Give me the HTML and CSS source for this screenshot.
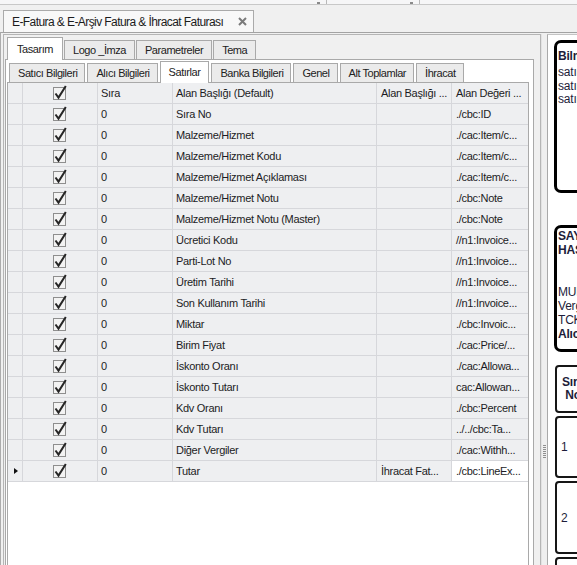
FILE: index.html
```html
<!DOCTYPE html>
<html lang="tr">
<head>
<meta charset="utf-8">
<title>E-Fatura Tasarım</title>
<link rel="stylesheet" href="styles.css">
</head>
<body>
<div class="toolbar">
  <div class="tb-box tb-a"><span class="tb-mark"></span></div>
  <div class="tb-box tb-b"><span class="tb-mark"></span></div>
</div>
<div class="doc-tabs">
  <div class="doc-tab">
    <span class="doc-title">E-Fatura &amp; E-Arşiv Fatura &amp; İhracat Faturası</span>
    <svg class="close" width="9" height="9" viewBox="0 0 9 9"><path d="M1 1 L8 8 M8 1 L1 8" stroke="#7b7b7b" stroke-width="2" fill="none"/></svg>
  </div>
</div>
<div class="doc-page">
  <div class="left-panel">
    <div class="tabs1">
      <div class="tab1 active">Tasarım</div>
      <div class="tab1">Logo _İmza</div>
      <div class="tab1">Parametreler</div>
      <div class="tab1">Tema</div>
    </div>
    <div class="page1">
      <div class="tabs2">
        <div class="tab2">Satıcı Bilgileri</div>
        <div class="tab2">Alıcı Bilgileri</div>
        <div class="tab2 active">Satırlar</div>
        <div class="tab2">Banka Bilgileri</div>
        <div class="tab2">Genel</div>
        <div class="tab2">Alt Toplamlar</div>
        <div class="tab2">İhracat</div>
      </div>
      <div class="page2">
        <div class="grid">
          <div class="row">
            <div class="c ind"></div>
            <div class="c chk"><svg class="cb" width="15" height="15" viewBox="0 0 15 15"><rect x="1.5" y="2.5" width="12" height="12" fill="#f3f3f3" stroke="#8e8e8e"/><path d="M3.5 8.5 L6.5 12.6 L13.8 1" fill="none" stroke="#262626" stroke-width="2"/></svg></div>
            <div class="c">Sıra</div>
            <div class="c">Alan Başlığı (Default)</div>
            <div class="c c4">Alan Başlığı ...</div>
            <div class="c c5">Alan Değeri ...</div>
          </div>
          <div class="row"><div class="c ind"></div><div class="c chk"><svg class="cb" width="15" height="15" viewBox="0 0 15 15"><rect x="1.5" y="2.5" width="12" height="12" fill="#f3f3f3" stroke="#8e8e8e"/><path d="M3.5 8.5 L6.5 12.6 L13.8 1" fill="none" stroke="#262626" stroke-width="2"/></svg></div><div class="c">0</div><div class="c">Sıra No</div><div class="c c4"></div><div class="c c5">./cbc:ID</div></div>
          <div class="row"><div class="c ind"></div><div class="c chk"><svg class="cb" width="15" height="15" viewBox="0 0 15 15"><rect x="1.5" y="2.5" width="12" height="12" fill="#f3f3f3" stroke="#8e8e8e"/><path d="M3.5 8.5 L6.5 12.6 L13.8 1" fill="none" stroke="#262626" stroke-width="2"/></svg></div><div class="c">0</div><div class="c">Malzeme/Hizmet</div><div class="c c4"></div><div class="c c5">./cac:Item/c...</div></div>
          <div class="row"><div class="c ind"></div><div class="c chk"><svg class="cb" width="15" height="15" viewBox="0 0 15 15"><rect x="1.5" y="2.5" width="12" height="12" fill="#f3f3f3" stroke="#8e8e8e"/><path d="M3.5 8.5 L6.5 12.6 L13.8 1" fill="none" stroke="#262626" stroke-width="2"/></svg></div><div class="c">0</div><div class="c">Malzeme/Hizmet Kodu</div><div class="c c4"></div><div class="c c5">./cac:Item/c...</div></div>
          <div class="row"><div class="c ind"></div><div class="c chk"><svg class="cb" width="15" height="15" viewBox="0 0 15 15"><rect x="1.5" y="2.5" width="12" height="12" fill="#f3f3f3" stroke="#8e8e8e"/><path d="M3.5 8.5 L6.5 12.6 L13.8 1" fill="none" stroke="#262626" stroke-width="2"/></svg></div><div class="c">0</div><div class="c">Malzeme/Hizmet Açıklaması</div><div class="c c4"></div><div class="c c5">./cac:Item/c...</div></div>
          <div class="row"><div class="c ind"></div><div class="c chk"><svg class="cb" width="15" height="15" viewBox="0 0 15 15"><rect x="1.5" y="2.5" width="12" height="12" fill="#f3f3f3" stroke="#8e8e8e"/><path d="M3.5 8.5 L6.5 12.6 L13.8 1" fill="none" stroke="#262626" stroke-width="2"/></svg></div><div class="c">0</div><div class="c">Malzeme/Hizmet Notu</div><div class="c c4"></div><div class="c c5">./cbc:Note</div></div>
          <div class="row"><div class="c ind"></div><div class="c chk"><svg class="cb" width="15" height="15" viewBox="0 0 15 15"><rect x="1.5" y="2.5" width="12" height="12" fill="#f3f3f3" stroke="#8e8e8e"/><path d="M3.5 8.5 L6.5 12.6 L13.8 1" fill="none" stroke="#262626" stroke-width="2"/></svg></div><div class="c">0</div><div class="c">Malzeme/Hizmet Notu (Master)</div><div class="c c4"></div><div class="c c5">./cbc:Note</div></div>
          <div class="row"><div class="c ind"></div><div class="c chk"><svg class="cb" width="15" height="15" viewBox="0 0 15 15"><rect x="1.5" y="2.5" width="12" height="12" fill="#f3f3f3" stroke="#8e8e8e"/><path d="M3.5 8.5 L6.5 12.6 L13.8 1" fill="none" stroke="#262626" stroke-width="2"/></svg></div><div class="c">0</div><div class="c">Ücretici Kodu</div><div class="c c4"></div><div class="c c5">//n1:Invoice...</div></div>
          <div class="row"><div class="c ind"></div><div class="c chk"><svg class="cb" width="15" height="15" viewBox="0 0 15 15"><rect x="1.5" y="2.5" width="12" height="12" fill="#f3f3f3" stroke="#8e8e8e"/><path d="M3.5 8.5 L6.5 12.6 L13.8 1" fill="none" stroke="#262626" stroke-width="2"/></svg></div><div class="c">0</div><div class="c">Parti-Lot No</div><div class="c c4"></div><div class="c c5">//n1:Invoice...</div></div>
          <div class="row"><div class="c ind"></div><div class="c chk"><svg class="cb" width="15" height="15" viewBox="0 0 15 15"><rect x="1.5" y="2.5" width="12" height="12" fill="#f3f3f3" stroke="#8e8e8e"/><path d="M3.5 8.5 L6.5 12.6 L13.8 1" fill="none" stroke="#262626" stroke-width="2"/></svg></div><div class="c">0</div><div class="c">Üretim Tarihi</div><div class="c c4"></div><div class="c c5">//n1:Invoice...</div></div>
          <div class="row"><div class="c ind"></div><div class="c chk"><svg class="cb" width="15" height="15" viewBox="0 0 15 15"><rect x="1.5" y="2.5" width="12" height="12" fill="#f3f3f3" stroke="#8e8e8e"/><path d="M3.5 8.5 L6.5 12.6 L13.8 1" fill="none" stroke="#262626" stroke-width="2"/></svg></div><div class="c">0</div><div class="c">Son Kullanım Tarihi</div><div class="c c4"></div><div class="c c5">//n1:Invoice...</div></div>
          <div class="row"><div class="c ind"></div><div class="c chk"><svg class="cb" width="15" height="15" viewBox="0 0 15 15"><rect x="1.5" y="2.5" width="12" height="12" fill="#f3f3f3" stroke="#8e8e8e"/><path d="M3.5 8.5 L6.5 12.6 L13.8 1" fill="none" stroke="#262626" stroke-width="2"/></svg></div><div class="c">0</div><div class="c">Miktar</div><div class="c c4"></div><div class="c c5">./cbc:Invoic...</div></div>
          <div class="row"><div class="c ind"></div><div class="c chk"><svg class="cb" width="15" height="15" viewBox="0 0 15 15"><rect x="1.5" y="2.5" width="12" height="12" fill="#f3f3f3" stroke="#8e8e8e"/><path d="M3.5 8.5 L6.5 12.6 L13.8 1" fill="none" stroke="#262626" stroke-width="2"/></svg></div><div class="c">0</div><div class="c">Birim Fiyat</div><div class="c c4"></div><div class="c c5">./cac:Price/...</div></div>
          <div class="row"><div class="c ind"></div><div class="c chk"><svg class="cb" width="15" height="15" viewBox="0 0 15 15"><rect x="1.5" y="2.5" width="12" height="12" fill="#f3f3f3" stroke="#8e8e8e"/><path d="M3.5 8.5 L6.5 12.6 L13.8 1" fill="none" stroke="#262626" stroke-width="2"/></svg></div><div class="c">0</div><div class="c">İskonto Oranı</div><div class="c c4"></div><div class="c c5">./cac:Allowa...</div></div>
          <div class="row"><div class="c ind"></div><div class="c chk"><svg class="cb" width="15" height="15" viewBox="0 0 15 15"><rect x="1.5" y="2.5" width="12" height="12" fill="#f3f3f3" stroke="#8e8e8e"/><path d="M3.5 8.5 L6.5 12.6 L13.8 1" fill="none" stroke="#262626" stroke-width="2"/></svg></div><div class="c">0</div><div class="c">İskonto Tutarı</div><div class="c c4"></div><div class="c c5">cac:Allowan...</div></div>
          <div class="row"><div class="c ind"></div><div class="c chk"><svg class="cb" width="15" height="15" viewBox="0 0 15 15"><rect x="1.5" y="2.5" width="12" height="12" fill="#f3f3f3" stroke="#8e8e8e"/><path d="M3.5 8.5 L6.5 12.6 L13.8 1" fill="none" stroke="#262626" stroke-width="2"/></svg></div><div class="c">0</div><div class="c">Kdv Oranı</div><div class="c c4"></div><div class="c c5">./cbc:Percent</div></div>
          <div class="row"><div class="c ind"></div><div class="c chk"><svg class="cb" width="15" height="15" viewBox="0 0 15 15"><rect x="1.5" y="2.5" width="12" height="12" fill="#f3f3f3" stroke="#8e8e8e"/><path d="M3.5 8.5 L6.5 12.6 L13.8 1" fill="none" stroke="#262626" stroke-width="2"/></svg></div><div class="c">0</div><div class="c">Kdv Tutarı</div><div class="c c4"></div><div class="c c5">../../cbc:Ta...</div></div>
          <div class="row"><div class="c ind"></div><div class="c chk"><svg class="cb" width="15" height="15" viewBox="0 0 15 15"><rect x="1.5" y="2.5" width="12" height="12" fill="#f3f3f3" stroke="#8e8e8e"/><path d="M3.5 8.5 L6.5 12.6 L13.8 1" fill="none" stroke="#262626" stroke-width="2"/></svg></div><div class="c">0</div><div class="c">Diğer Vergiler</div><div class="c c4"></div><div class="c c5">./cac:Withh...</div></div>
          <div class="row"><div class="c ind"><span class="arrow"></span></div><div class="c chk"><svg class="cb" width="15" height="15" viewBox="0 0 15 15"><rect x="1.5" y="2.5" width="12" height="12" fill="#f3f3f3" stroke="#8e8e8e"/><path d="M3.5 8.5 L6.5 12.6 L13.8 1" fill="none" stroke="#262626" stroke-width="2"/></svg></div><div class="c">0</div><div class="c">Tutar</div><div class="c c4">İhracat Fat...</div><div class="c c5 focus">./cbc:LineEx...</div></div>
        </div>
      </div>
    </div>
  </div>
  <div class="splitter"><div class="grip"></div></div>
  <div class="right-panel">
    <div class="box box1">
      <div class="b">Bilmeniz gereken notlar</div>
      <div class="l">satır açıklaması 1</div>
      <div class="l">satır açıklaması 2</div>
      <div class="l">satır açıklaması 3</div>
    </div>
    <div class="box box2">
      <div class="b">SAYIN</div>
      <div class="b">HASAN YILMAZ</div>
      <div class="l">&nbsp;</div>
      <div class="l">&nbsp;</div>
      <div class="l">MUHASEBE</div>
      <div class="l">Vergi Dairesi:</div>
      <div class="l">TCKN:</div>
      <div class="b">Alıcı Bilgileri</div>
    </div>
    <div class="tbl">
      <div class="cell head"><span class="hl">Sıra</span><span class="hl">No</span></div>
      <div class="cell r1">1</div>
      <div class="cell r2">2</div>
      <div class="cell r3"></div>
    </div>
  </div>
</div>
</body>
</html>
```
FILE: styles.css
```css
* { box-sizing: border-box; }
html, body { margin: 0; height: 100%; overflow: hidden; }
body {
  width: 577px;
  height: 565px;
  background: #f0f0f0;
  font-family: "Liberation Sans", Arial, sans-serif;
  font-size: 11px;
  letter-spacing: -0.3px;
  color: #1e1e1e;
  display: flex;
  flex-direction: column;
}

/* top toolbar remnant */
.toolbar {
  height: 5px;
  flex-shrink: 0;
  background: #f6f6f7;
  border-bottom: 1px solid #c8c8c8;
  display: flex;
  padding-left: 200px;
}
.tb-box {
  height: 4px;
  border-right: 1px solid #b9b9b9;
  position: relative;
}
.tb-a { width: 127px; }
.tb-b { width: 93px; }
.tb-mark {
  position: absolute;
  right: 6px;
  bottom: 0;
  width: 3px;
  height: 2px;
  background: #8a8a8a;
}

/* document tab */
.doc-tabs {
  height: 27px;
  flex-shrink: 0;
  padding: 5px 0 0 3px;
  display: flex;
}
.doc-tab {
  height: 22px;
  border: 1px solid #aaaaaa;
  border-bottom: none;
  background: #f8f8f8;
  padding: 0 6px 0 8px;
  display: flex;
  align-items: center;
  font-size: 12px;
  color: #1c1c1c;
}
.doc-title { margin-right: 15px; letter-spacing: -0.58px; }
.close { display: block; }

/* document page */
.doc-page {
  flex: 1;
  min-height: 0;
  display: flex;
  border-top: 1px solid #a3a3a3;
  border-left: 1px solid #acacac;
  padding: 1px 0 0 2px;
}
.left-panel {
  width: 538px;
  flex-shrink: 0;
  border: 1px solid #b5b5b5;
  border-bottom: none;
  padding: 2px 6px 0 1px;
  display: flex;
  flex-direction: column;
}

/* level 1 tabs */
.tabs1 {
  height: 22px;
  flex-shrink: 0;
  display: flex;
  align-items: flex-start;
  padding-left: 2px;
  gap: 1px;
}
.tab1 {
  margin-top: 3px;
  height: 19px;
  border: 1px solid #a9a9a9;
  border-bottom: none;
  background: #ebebeb;
  padding: 0 8px;
  line-height: 18px;
  letter-spacing: -0.45px;
  white-space: nowrap;
  color: #222;
}
.tab1.active {
  margin-top: 0;
  height: 23px;
  line-height: 22px;
  padding: 0 9px;
  background: #fff;
  position: relative;
  z-index: 1;
}
.page1 {
  flex: 1;
  min-height: 0;
  border: 1px solid #a9a9a9;
  border-bottom: none;
  background: #fff;
  padding: 1px 4px 0 1px;
  display: flex;
  flex-direction: column;
}

/* level 2 tabs */
.tabs2 {
  height: 21px;
  flex-shrink: 0;
  display: flex;
  align-items: flex-start;
  padding-left: 2px;
  gap: 2px;
}
.tab2 {
  margin-top: 2px;
  height: 19px;
  border: 1px solid #a9a9a9;
  border-bottom: none;
  background: #ebebeb;
  padding: 0 7px 0 8px;
  line-height: 18px;
  letter-spacing: -0.45px;
  white-space: nowrap;
  color: #222;
}
.tab2.active {
  margin-top: 0;
  height: 22px;
  line-height: 20px;
  padding: 0 8px;
  background: #fff;
  position: relative;
  z-index: 1;
}
.page2 {
  flex: 1;
  min-height: 0;
  width: 522px;
  border: 1px solid #a9a9a9;
  border-bottom: none;
  background: #fff;
}

/* grid */
.row {
  display: grid;
  grid-template-columns: 15px 75px 75px 204px 75px 76px;
  height: 21px;
}
.c {
  height: 21px;
  border-right: 1px solid #d6d7db;
  border-bottom: 1px solid #d6d7db;
  background: #eeeff1;
  padding: 0 3px;
  line-height: 20px;
  white-space: nowrap;
  overflow: hidden;
  color: #1c1c24;
}
.c4 { padding-left: 4px; }
.c5 { padding-left: 4px; border-right: none; }
.c.focus { background: #fff; }
.ind { padding: 0; display: flex; align-items: center; justify-content: center; }
.chk { padding: 0; display: flex; align-items: center; justify-content: center; }
.cb { display: block; margin-top: -2px; margin-left: -1px; }
.arrow {
  width: 0;
  height: 0;
  border-left: 4px solid #111;
  border-top: 3.5px solid transparent;
  border-bottom: 3.5px solid transparent;
  margin-left: 1px;
}

/* splitter */
.splitter {
  width: 6px;
  flex-shrink: 0;
  background: #efefef;
  border-left: 1px solid #e2e2e2;
  padding-left: 1px;
}
.grip {
  width: 3px;
  height: 13px;
  margin-top: 411px;
  background: repeating-linear-gradient(to bottom, #8f8f8f 0, #8f8f8f 1px, transparent 1px, transparent 2px);
}

/* right panel */
.right-panel {
  flex: 1;
  min-width: 0;
  overflow: hidden;
  background: #fff;
  border-left: 1px solid #a9a9a9;
  border-top: 1px solid #c4c4c4;
  padding: 5px 0 0 6px;
  font-size: 12px;
  letter-spacing: -0.2px;
  color: #1d1d3a;
}
.box {
  width: 220px;
  border: 3px solid #000;
  border-radius: 7px;
  white-space: nowrap;
}
.box1 {
  height: 153px;
  padding: 6px 0 0 1px;
}
.box1 .b { line-height: 14px; margin-bottom: 3px; font-weight: bold; }
.box1 .l { line-height: 13.5px; }
.box2 {
  margin-top: 32px;
  height: 127px;
  padding: 1px 0 0 1px;
}
.box2 .b, .box2 .l { line-height: 14px; }
.box2 .b { font-weight: bold; }
.tbl {
  margin-top: 13px;
  margin-left: 1px;
  display: flex;
  flex-direction: column;
  gap: 3px;
}
.cell {
  width: 200px;
  border: 2px solid #161616;
  border-radius: 4px;
  display: flex;
  align-items: center;
  padding-left: 4px;
}
.cell.head {
  height: 48px;
  width: 36px;
  padding-left: 0;
  flex-direction: column;
  justify-content: center;
  font-weight: bold;
}
.hl { display: block; line-height: 13px; white-space: nowrap; }
.cell.r1 { height: 62px; }
.cell.r2 { height: 73px; }
.cell.r3 { height: 40px; }
```
